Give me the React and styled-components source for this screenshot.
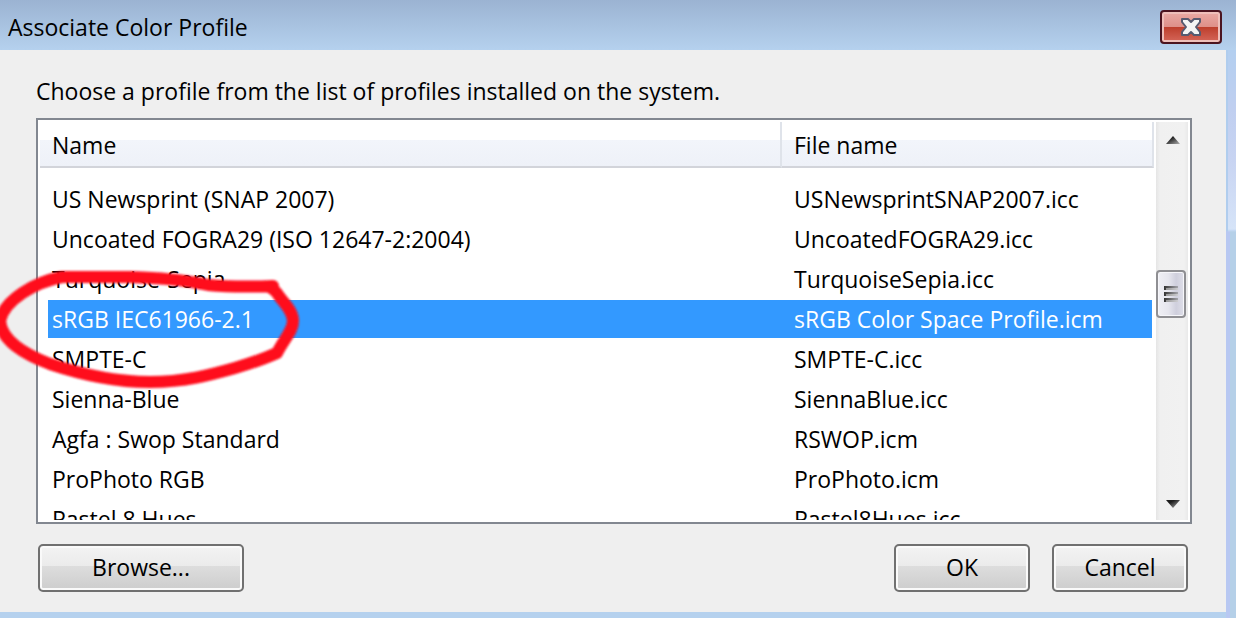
import React, { useState } from 'react';
import styled, { createGlobalStyle } from 'styled-components';

const GlobalStyle = createGlobalStyle`
	*{
		box-sizing: border-box;
	}

	body{
		margin: 0;
		background: #b5d1ee;
		color: #000000;
		font-family: "Open Sans", "Noto Sans", sans-serif;
		font-size: 23px;
		line-height: 32px;
	}

	button{
		font: inherit;
		color: inherit;
		padding: 0;
		margin: 0;
	}
`;

const Window = styled.div`
	position: relative;
	display: flex;
	flex-direction: column;
	height: 100vh;
	min-height: 400px;
	padding: 0 10px 6px 0;
	overflow: hidden;
	background:
		linear-gradient(#9bb3d2, #b5d1ee) top / 100% 50px no-repeat,
		linear-gradient(#b3cff0 50px, #c0cff0 110px, #c8d4f2 160px, #d6e4f8 229px, transparent 232px) right / 8px 100% no-repeat,
		linear-gradient(#b0cdee 231px, transparent 231px) right / 10px 100% no-repeat,
		linear-gradient(#b5d0e8, #b5d0e8) right / 6px 100% no-repeat,
		#b8c8f2;
`;

const TitleBar = styled.header`
	display: flex;
	align-items: center;
	justify-content: space-between;
	height: 50px;
	flex: none;
	padding: 4px 4px 0 8px;

	h1{
		margin: 0;
		font-size: 23px;
		font-weight: 400;
	}
`;

const CloseButton = styled.button`
	display: flex;
	align-items: center;
	justify-content: center;
	width: 62px;
	height: 34px;
	border: 2px solid #4b1420;
	border-radius: 4px;
	box-shadow: inset 0 0 0 2px #eebfba;
	background: linear-gradient(#e9aaa5, #de8f88 50%, #bd3e2c 50%, #d5675a);
`;

const Content = styled.main`
	display: flex;
	flex-direction: column;
	flex: 1;
	min-height: 0;
	padding: 25px 34px 20px 36px;
	background: #efefef;
	box-shadow: 0 6px 0 #b5d1ee;
`;

const Prompt = styled.p`
	margin: 0 0 11px;
`;

const ListBox = styled.div`
	display: flex;
	gap: 2px;
	flex: 1;
	min-height: 0;
	padding: 2px;
	border: 2px solid #828790;
	background: #ffffff;
`;

const ListView = styled.div`
	flex: 1;
	overflow: hidden;
`;

const ProfileTable = styled.table`
	width: 100%;
	table-layout: fixed;
	border-spacing: 0;
	text-align: left;

	tbody::before{
		content: '';
		display: block;
		height: 12px;
	}
`;

const HeaderCell = styled.th`
	width: ${props => props.$width || 'auto'};
	height: 46px;
	padding: 2px 12px 0;
	border-right: 2px solid #dfe3ea;
	border-bottom: 2px solid #d2d4da;
	background: linear-gradient(#ffffff 18px, #f2f5fb 18px, #eef1f8);
	font-weight: 400;
`;

const Cell = styled.td`
	height: 40px;
	padding: 0 12px;
	border-bottom: 2px solid transparent;
	background-clip: padding-box;
	white-space: nowrap;

	&:first-child{
		padding-left: 4px;
		border-left: 8px solid transparent;
	}

	&:last-child{
		border-right: 2px solid transparent;
	}
`;

const Row = styled.tr`
	cursor: default;

	${Cell}{
		color: ${props => props.$selected ? '#ffffff' : '#000000'};
		background-color: ${props => props.$selected ? '#3399ff' : 'transparent'};
	}
`;

const ScrollBar = styled.div`
	display: flex;
	flex-direction: column;
	width: 32px;
	background: linear-gradient(90deg, #e5e5e5, #f0f0f0 4px, #f1f1f1 28px, #e9e9e9);
`;

const ScrollArrow = styled.button`
	display: flex;
	align-items: center;
	justify-content: center;
	height: 34px;
	padding: 2px 0 0 2px;
	border: 0;
	background: none;
`;

const Track = styled.div`
	display: flex;
	flex-direction: column;
	flex: 1;
`;

const TrackSpace = styled.div`
	flex: ${props => props.$size} 0 0;
`;

const Thumb = styled.button`
	display: flex;
	align-items: center;
	justify-content: center;
	flex: none;
	width: 30px;
	height: 48px;
	border: 2px solid #8f8f93;
	border-radius: 4px;
	box-shadow: inset 0 0 0 1px #f6f6fa;
	background: linear-gradient(90deg, #f0f0f5, #e6e6ee 40%, #cfcfdd 70%, #dedee8);
`;

const Buttons = styled.footer`
	display: flex;
	gap: 22px;
	margin-top: 20px;
	padding: 0 4px 0 2px;
`;

const DialogButton = styled.button`
	width: ${props => props.$wide ? '206px' : '136px'};
	height: 48px;
	margin-right: ${props => props.$wide ? 'auto' : '0'};
	padding-bottom: 2px;
	border: 2px solid #707070;
	border-radius: 5px;
	box-shadow: inset 0 0 0 2px #fafafa;
	background: linear-gradient(#f3f3f3, #ebebeb 46%, #dddddd 46%, #cdcdcd);
`;

const Marker = styled.svg`
	position: absolute;
	left: 0;
	top: 264px;
	pointer-events: none;
`;

const profiles = [
	{ name: 'US Newsprint (SNAP 2007)', file: 'USNewsprintSNAP2007.icc' },
	{ name: 'Uncoated FOGRA29 (ISO 12647-2:2004)', file: 'UncoatedFOGRA29.icc' },
	{ name: 'Turquoise-Sepia', file: 'TurquoiseSepia.icc' },
	{ name: 'sRGB IEC61966-2.1', file: 'sRGB Color Space Profile.icm' },
	{ name: 'SMPTE-C', file: 'SMPTE-C.icc' },
	{ name: 'Sienna-Blue', file: 'SiennaBlue.icc' },
	{ name: 'Agfa : Swop Standard', file: 'RSWOP.icm' },
	{ name: 'ProPhoto RGB', file: 'ProPhoto.icm' },
	{ name: 'Pastel 8 Hues', file: 'Pastel8Hues.icc' },
];

function CloseIcon(){
	return(
		<svg width='24' height='20' viewBox='0 0 24 20' aria-hidden='true'>
			<path d='M3 2H9L12 5L15 2H21V5L17 10L21 15V18H15L12 15L9 18H3V15L7 10L3 5Z' fill='#f4f4f4' stroke='#565a70' strokeWidth='2' strokeLinejoin='round'/>
		</svg>
	);
}

function ArrowIcon({ down }){
	return(
		<svg width='14' height='8' viewBox='0 0 14 8' aria-hidden='true'>
			<defs>
				<linearGradient id={down ? 'arrowDown' : 'arrowUp'} x1='0' y1='0' x2='1' y2='1'>
					<stop offset='0.3' stopColor='#1c1c1c'/>
					<stop offset='1' stopColor='#b0b0b0'/>
				</linearGradient>
			</defs>
			<path d={down ? 'M0 0H14L7 8Z' : 'M0 8L7 0L14 8Z'} fill={`url(#${down ? 'arrowDown' : 'arrowUp'})`}/>
		</svg>
	);
}

function GripIcon(){
	return(
		<svg width='14' height='16' viewBox='0 0 14 16' aria-hidden='true'>
			<defs>
				<linearGradient id='grip'>
					<stop offset='0' stopColor='#333333'/>
					<stop offset='1' stopColor='#a5a5ab'/>
				</linearGradient>
			</defs>
			{[0, 6, 12].map((y) => (
				<g key={y}>
					<rect x='0' y={y} width='14' height='4' fill='url(#grip)'/>
					<rect x='2' y={y + 2} width='12' height='2' fill='#ffffff' opacity='0.45'/>
				</g>
			))}
		</svg>
	);
}

export default function App(){

	const [selected, setSelected] = useState(3);

	return(
		<>
			<GlobalStyle/>
			<Window>
				<TitleBar>
					<h1>Associate Color Profile</h1>
					<CloseButton aria-label='Close'><CloseIcon/></CloseButton>
				</TitleBar>
				<Content>
					<Prompt id='prompt'>Choose a profile from the list of profiles installed on the system.</Prompt>
					<ListBox>
						<ListView>
							<ProfileTable aria-labelledby='prompt'>
								<thead>
									<tr>
										<HeaderCell>Name</HeaderCell>
										<HeaderCell $width='372px'>File name</HeaderCell>
									</tr>
								</thead>
								<tbody>
									{profiles.map((p, i) => (
										<Row key={p.file} $selected={i === selected} onClick={() => setSelected(i)}>
											<Cell>{p.name}</Cell>
											<Cell>{p.file}</Cell>
										</Row>
									))}
								</tbody>
							</ProfileTable>
						</ListView>
						<ScrollBar>
							<ScrollArrow aria-label='Scroll up'><ArrowIcon/></ScrollArrow>
							<Track>
								<TrackSpace $size={15}/>
								<Thumb aria-label='Scroll position'><GripIcon/></Thumb>
								<TrackSpace $size={22}/>
							</Track>
							<ScrollArrow aria-label='Scroll down'><ArrowIcon down/></ScrollArrow>
						</ScrollBar>
					</ListBox>
					<Buttons>
						<DialogButton $wide>Browse...</DialogButton>
						<DialogButton>OK</DialogButton>
						<DialogButton>Cancel</DialogButton>
					</Buttons>
				</Content>
				{/* hand-drawn ring around the sRGB profile */}
				<Marker width='310' height='132' viewBox='0 264 310 132' aria-hidden='true'>
					<defs>
						<filter id='soft'><feGaussianBlur stdDeviation='1'/></filter>
					</defs>
					<path
						d='M273 286C250 287 230 287 208 285C180 279 155 278 130 277L62 277C35 282 4 300 0 321C2 341 24 354 50 364C80 374 115 382 150 382C185 382 210 375 235 368C252 363 266 358 277 353C284 339 293 331 293 321C293 311 284 303 279 296C276 291 274 289 269 287'
						fill='none' stroke='#ff0a1e' strokeWidth='12' strokeLinecap='round' strokeLinejoin='round' filter='url(#soft)'
					/>
				</Marker>
			</Window>
		</>
	);
}
